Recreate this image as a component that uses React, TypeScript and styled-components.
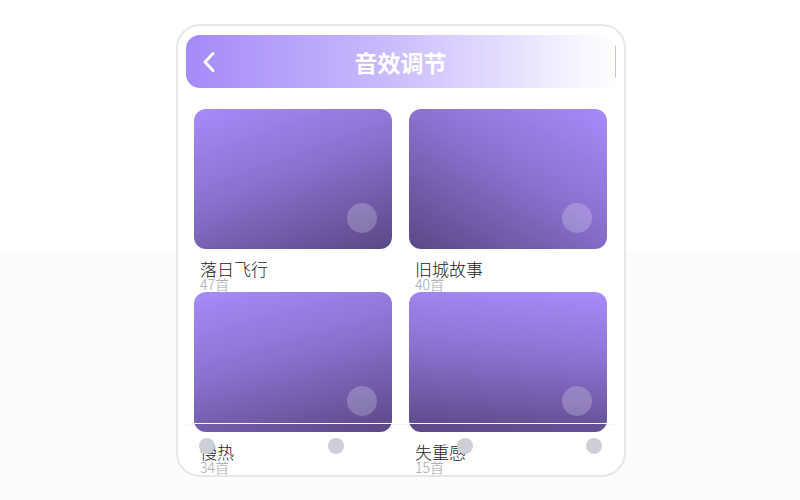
import React from "react";
import styled, { createGlobalStyle } from "styled-components";

interface IPlaylist {
  title: string;
  count: number;
  angle: number;
}

const playlists: IPlaylist[] = [
  { title: "落日飞行", count: 47, angle: 160 },
  { title: "旧城故事", count: 40, angle: 210 },
  { title: "慢热", count: 34, angle: 165 },
  { title: "失重感", count: 15, angle: 185 },
];

const GlobalStyle = createGlobalStyle`
  html, body {
    margin: 0;
    padding: 0;
  }
  body {
    background: linear-gradient(to bottom, #ffffff 0, #ffffff 251px, #fcfcfd 251px);
    min-height: 500px;
    font-family: "Noto Sans CJK SC", "Noto Sans", sans-serif;
  }
`;

const Page = styled.div`
  display: flex;
  justify-content: center;
  padding-top: 24px;
`;

const Phone = styled.div`
  position: relative;
  width: 450px;
  height: 453px;
  box-sizing: border-box;
  border: 2px solid #e6e7eb;
  border-radius: 24px;
  background: #ffffff;
  overflow: hidden;
  padding: 9px 8px 0;
  margin-left: 2px;
`;

const Header = styled.div`
  display: flex;
  align-items: center;
  height: 53px;
  border-radius: 14px;
  background: linear-gradient(90deg, #a48af8 0%, #c8b8fc 45%, #ffffff 100%);
  padding: 0 0 0 16px;
`;

const BackButton = styled.div`
  display: flex;
  align-items: center;
  width: 40px;
`;

const Title = styled.div`
  flex: 1;
  text-align: center;
  color: #ffffff;
  font-size: 23px;
  font-weight: 700;
  margin-right: 56px;
`;

const RightEdge = styled.div`
  width: 1px;
  height: 32px;
  background: #c9bdf8;
`;

const Grid = styled.div`
  display: grid;
  grid-template-columns: 1fr 1fr;
  grid-auto-rows: 183px;
  column-gap: 17px;
  padding: 21px 9px 0 8px;
`;

const Item = styled.div`
  display: flex;
  flex-direction: column;
`;

const Cover = styled.div<{ $angle: number }>`
  position: relative;
  height: 140px;
  border-radius: 12px;
  background: linear-gradient(${(p) => p.$angle}deg, #a78bfa 0%, #8a72d0 45%, #5a4885 100%);
  flex-shrink: 0;
`;

const PlayDot = styled.div`
  position: absolute;
  right: 15px;
  bottom: 16px;
  width: 30px;
  height: 30px;
  border-radius: 50%;
  background: rgba(255, 255, 255, 0.22);
`;

const Info = styled.div`
  display: flex;
  flex-direction: column;
  padding: 9px 6px 0;
`;

const Name = styled.div`
  font-size: 17px;
  font-weight: 300;
  line-height: 21px;
  color: #222222;
`;

const Count = styled.div`
  font-size: 14px;
  font-weight: 300;
  line-height: 15px;
  color: #a3a6ad;
  margin-top: -2px;
`;

const TabBar = styled.div`
  position: absolute;
  left: 9px;
  right: 9px;
  bottom: 0;
  height: 52px;
  border-top: 1px solid rgba(255, 255, 255, 0.95);
  box-shadow: inset 0 1px 0 rgba(0, 0, 0, 0.04);
  display: flex;
  justify-content: space-between;
  align-items: flex-start;
  padding: 14px 13px 0 12px;
  box-sizing: border-box;
`;

const TabDot = styled.div`
  width: 16px;
  height: 16px;
  border-radius: 50%;
  background: #cbcfd6;
`;

const ChevronLeft: React.FC = () => (
  <svg width="14" height="22" viewBox="0 0 14 22" fill="none">
    <path
      d="M11 2.5 L3 11 L11 19.5"
      stroke="#ffffff"
      strokeWidth="3"
      strokeLinecap="round"
      strokeLinejoin="round"
    />
  </svg>
);

export default function App() {
  return (
    <>
      <GlobalStyle />
      <Page>
        <Phone>
          <Header>
            <BackButton>
              <ChevronLeft />
            </BackButton>
            <Title>音效调节</Title>
            <RightEdge />
          </Header>
          <Grid>
            {playlists.map((p) => (
              <Item key={p.title}>
                <Cover $angle={p.angle}>
                  <PlayDot />
                </Cover>
                <Info>
                  <Name>{p.title}</Name>
                  <Count>{p.count}首</Count>
                </Info>
              </Item>
            ))}
          </Grid>
          <TabBar>
            <TabDot />
            <TabDot />
            <TabDot />
            <TabDot />
          </TabBar>
        </Phone>
      </Page>
    </>
  );
}
